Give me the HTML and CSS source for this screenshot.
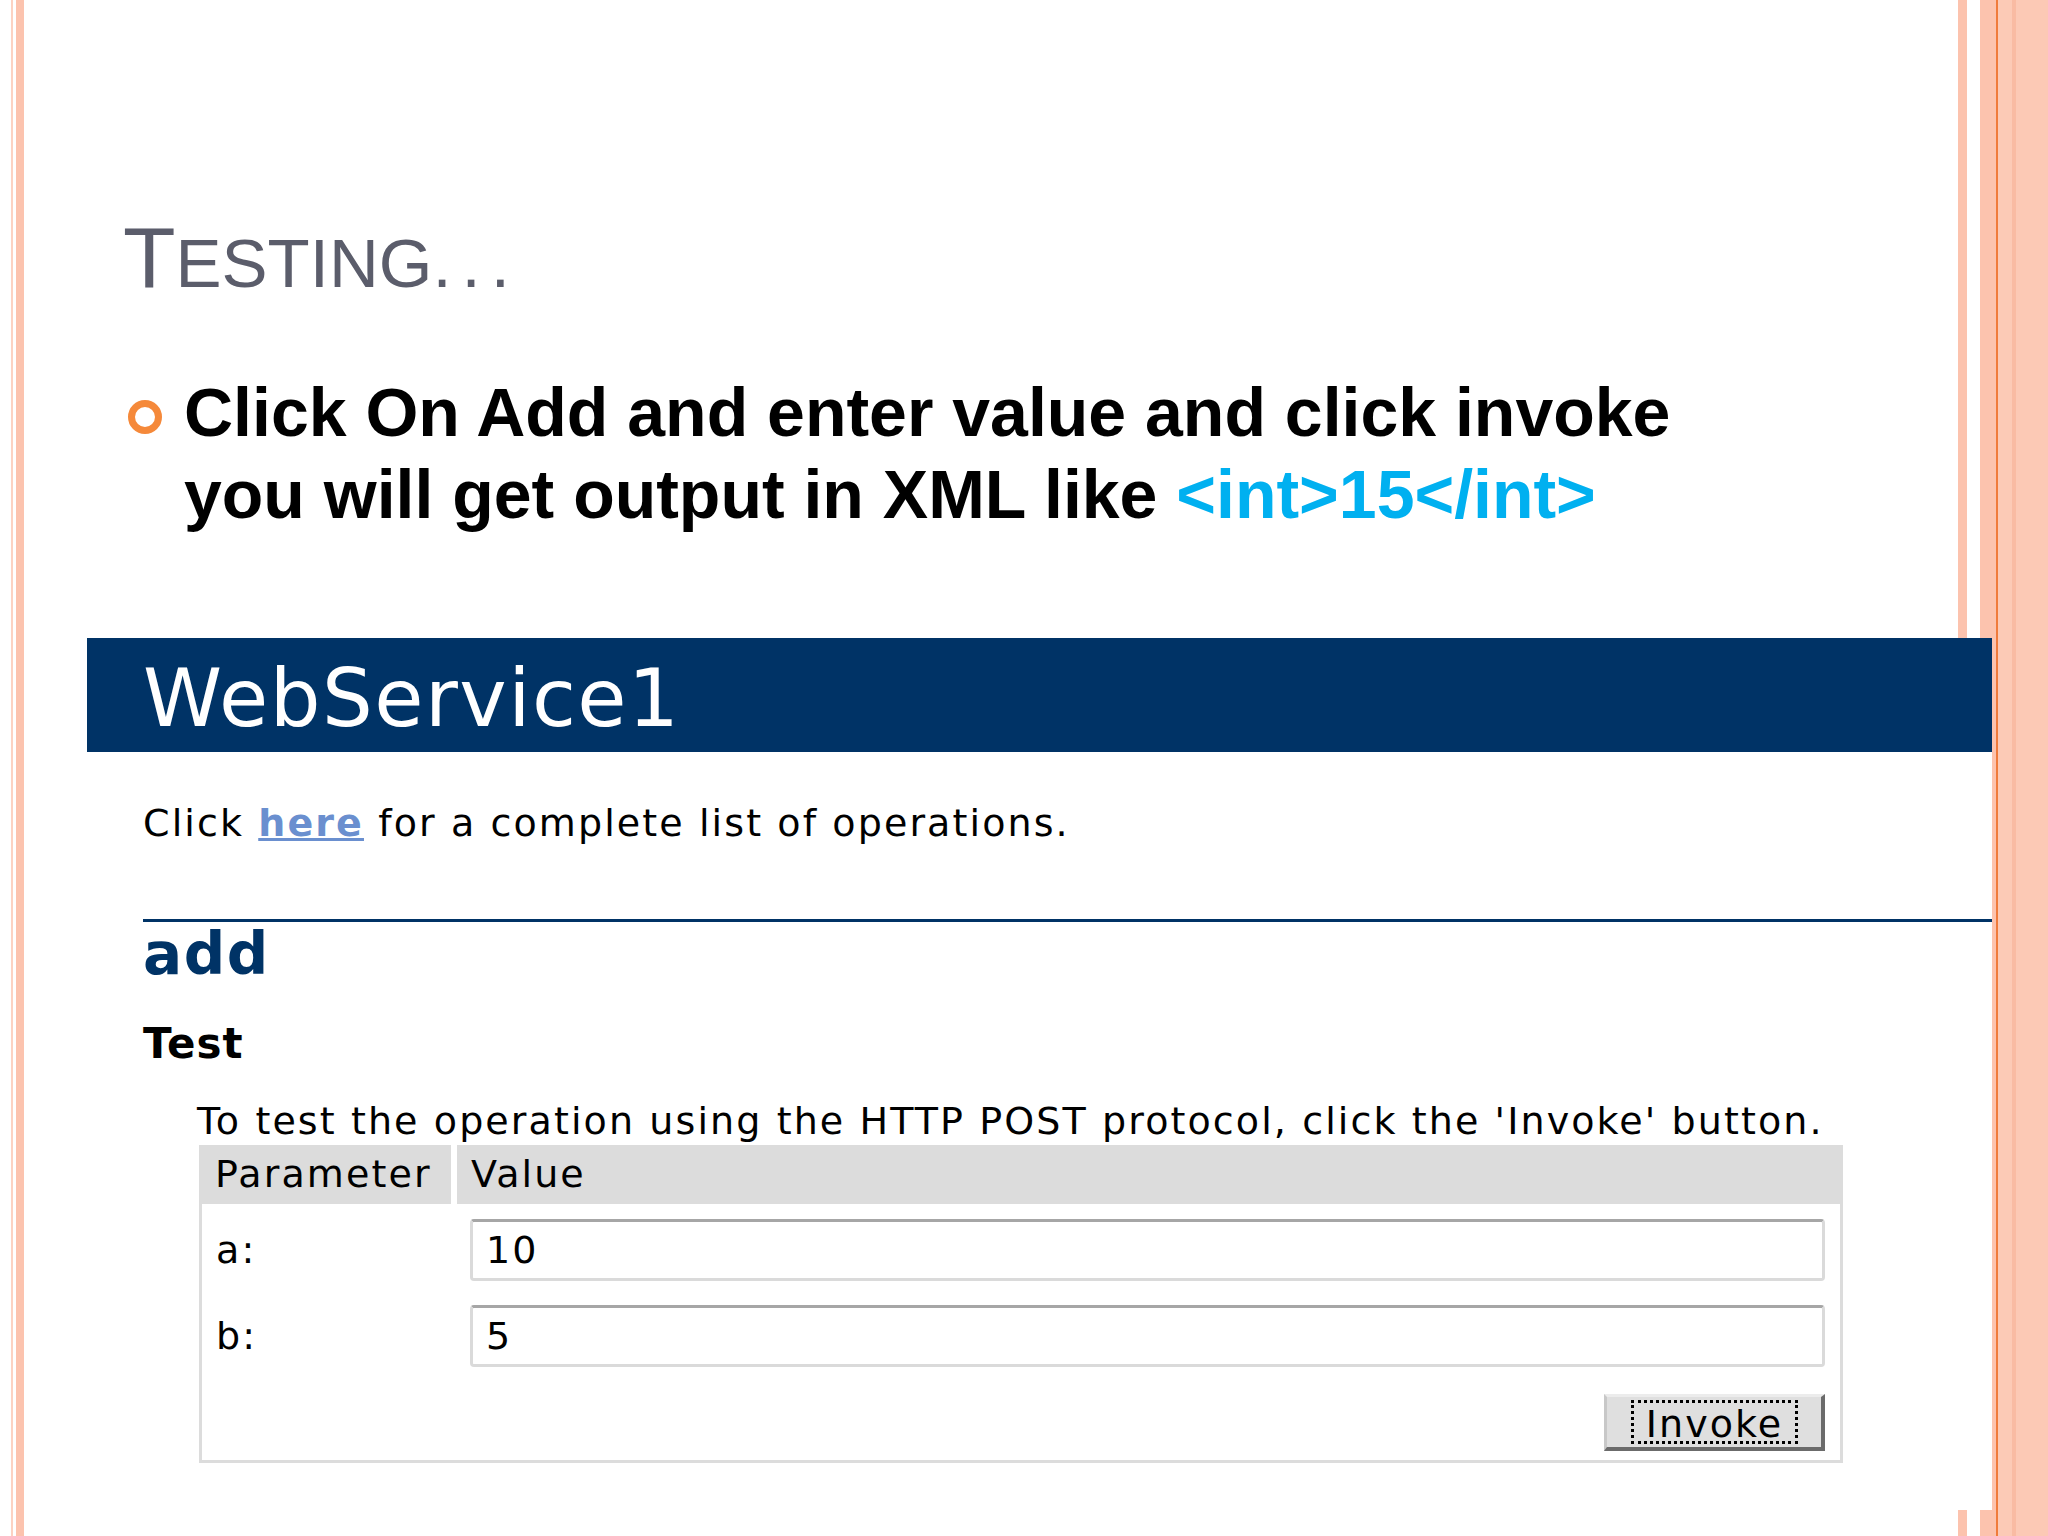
FILE: index.html
```html
<!DOCTYPE html>
<html lang="en">
<head>
    <meta charset="UTF-8">
    <title>Testing - WebService1</title>
    <link rel="stylesheet" href="styles.css">
</head>
<body>
    <div class="slide">
        <h1 class="title">T<span class="sc">ESTING<span class="dots">...</span></span></h1>

        <div class="bullet">
            <span class="dot"></span>
            <p>Click On Add and enter value and click invoke<br>you will get output in XML like <span class="code">&lt;int&gt;15&lt;/int&gt;</span></p>
        </div>

        <!-- screenshot of the asmx test page -->
        <div class="shot">
            <div class="heading1">WebService1</div>
            <div class="content">
                <p class="intro">Click <a href="#">here</a> for a complete list of operations.</p>
                <h2>add</h2>
                <h3>Test</h3>
                <p class="frmtext">To test the operation using the HTTP POST protocol, click the 'Invoke' button.</p>

                <div class="form">
                    <div class="frm-head">
                        <span class="h-param">Parameter</span>
                        <span class="h-value">Value</span>
                    </div>
                    <div class="frm-body">
                        <div class="frm-row">
                            <span class="lbl">a:</span>
                            <input class="inp" type="text" value="10">
                        </div>
                        <div class="frm-row">
                            <span class="lbl">b:</span>
                            <input class="inp" type="text" value="5">
                        </div>
                        <div class="frm-btn">
                            <button class="invoke"><span>Invoke</span></button>
                        </div>
                    </div>
                </div>
            </div>
        </div>
    </div>
</body>
</html>
```

FILE: styles.css
```css
html, body {
    margin: 0;
    padding: 0;
}

body {
    width: 2048px;
    height: 1536px;
    overflow: hidden;
    background: linear-gradient(to right,
        #fff 0 11px,
        #fcd2c2 11px 13px,
        #fff 13px 16px,
        #fcc3ae 16px 24px,
        #fff 24px 1958px,
        #fcc3ae 1958px 1967px,
        #fff 1967px 1980px,
        #fcc3ae 1980px 1996px,
        #f07b3b 1996px 1998px,
        #fccab6 1998px 2012px,
        #f9bba3 2012px 2016px,
        #fcc9b5 2016px);
}

.slide {
    height: 1536px;
    box-sizing: border-box;
    padding-top: 207px;
}

.title {
    margin: 0 0 0 123px;
    font-family: "Liberation Sans", Arial, sans-serif;
    font-weight: normal;
    font-size: 86px;
    line-height: 100px;
    color: #5b5d6b;
}

.title .sc {
    font-size: 69px;
    line-height: 1;
}

.title .dots {
    letter-spacing: 10px;
}

.bullet {
    display: flex;
    gap: 22px;
    margin-top: 64px;
    padding-left: 128px;
}

.dot {
    flex: none;
    width: 34px;
    height: 34px;
    margin-top: 29px;
    box-sizing: border-box;
    border: 7px solid #f5893a;
    border-radius: 50%;
}

.bullet p {
    margin: 0;
    font-family: "Liberation Sans", Arial, sans-serif;
    font-weight: bold;
    font-size: 68px;
    line-height: 82px;
    color: #000;
    white-space: nowrap;
}

.code {
    color: #00b0f0;
}

/* asmx page */
.shot {
    margin: 103px 0 0 87px;
    width: 1905px;
    height: 872px;
    background: #fff;
    font-family: "DejaVu Sans", Verdana, sans-serif;
    color: #000;
}

.heading1 {
    height: 114px;
    box-sizing: border-box;
    padding: 8px 0 0 56px;
    background: #003366;
    color: #fff;
    font-size: 80px;
    line-height: 106px;
    letter-spacing: 1.5px;
}

.content {
    padding-left: 56px;
}

.intro {
    margin: 46px 0 0;
    font-size: 38px;
    line-height: 50px;
    letter-spacing: 2.1px;
}

.intro a {
    color: #6a8fcf;
    font-weight: bold;
    text-decoration: underline;
}

h2 {
    margin: 71px 0 0;
    border-top: 3px solid #003366;
    font-size: 58px;
    line-height: 64px;
    letter-spacing: 1.5px;
    color: #003366;
}

h3 {
    margin: 33px 0 0;
    font-size: 42px;
    line-height: 50px;
    letter-spacing: 1px;
}

.frmtext {
    margin: 27px 0 0 54px;
    font-size: 38px;
    line-height: 50px;
    letter-spacing: 2.1px;
}

.form {
    margin: -1px 0 0 56px;
    width: 1644px;
    box-sizing: border-box;
    border: 3px solid #dcdcdc;
    border-top: 0;
    font-size: 38px;
    letter-spacing: 2.1px;
}

.frm-head {
    display: flex;
    height: 59px;
    line-height: 59px;
    background: #dcdcdc;
}

.h-param {
    width: 255px;
    box-sizing: border-box;
    padding-left: 13px;
    border-right: 6px solid #fff;
}

.h-value {
    padding-left: 14px;
}

.frm-body {
    display: flex;
    flex-direction: column;
    gap: 24px;
    padding: 15px 15px 9px 0;
}

.frm-row {
    display: flex;
}

.lbl {
    width: 268px;
    box-sizing: border-box;
    padding-left: 14px;
    line-height: 62px;
}

.inp {
    flex: 1;
    height: 62px;
    box-sizing: border-box;
    padding: 0 13px;
    border: 3px solid #dadada;
    border-top-color: #a6a6a6;
    border-radius: 4px;
    background: #fff;
    color: #000;
    font-family: "DejaVu Sans", Verdana, sans-serif;
    font-size: 38px;
    letter-spacing: 2.1px;
    outline: none;
}

.frm-btn {
    display: flex;
    justify-content: flex-end;
    margin-top: 3px;
}

.invoke {
    width: 221px;
    height: 57px;
    box-sizing: border-box;
    padding: 3px 23px 3px 24px;
    border: 3px solid;
    border-color: #ececec #6b6b6b #6b6b6b #c8c8c8;
    border-width: 3px 4px 4px 3px;
    background: #dfdfdf;
    font-family: "DejaVu Sans", Verdana, sans-serif;
    font-size: 38px;
    letter-spacing: 2.1px;
    color: #000;
}

.invoke span {
    display: block;
    height: 100%;
    box-sizing: border-box;
    border: 3px dotted #000;
    line-height: 42px;
}
```
